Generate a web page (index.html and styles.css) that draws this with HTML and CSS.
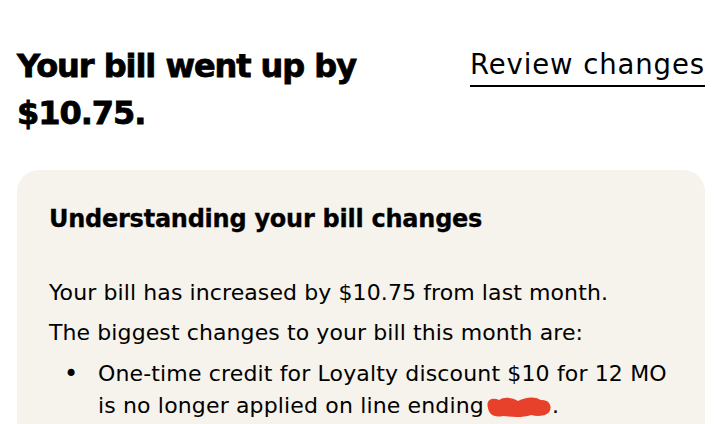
FILE: index.html
```html
<!DOCTYPE html>
<html lang="en">
<head>
    <meta charset="UTF-8">
    <meta name="viewport" content="width=device-width, initial-scale=1.0">
    <title>Bill changes</title>
    <link rel="stylesheet" href="styles.css">
</head>
<body>
    <div class="page">
        <!-- Header row -->
        <div class="header">
            <h1 class="headline">Your bill went up by<br>$10.75.</h1>
            <a class="review-link" href="#">Review changes</a>
        </div>

        <!-- Explanation card -->
        <div class="card">
            <h2 class="card-title">Understanding your bill changes</h2>
            <p class="card-text">Your bill has increased by $10.75 from last month.</p>
            <p class="card-text">The biggest changes to your bill this month are:</p>
            <ul class="changes">
                <li><span>One-time credit for Loyalty discount $10 for 12 MO is no longer applied on line ending<span class="redacted"><svg width="68" height="24" viewBox="0 0 72 24" preserveAspectRatio="none"><path d="M4 12 C2 4 10 2 16 5 C22 1 30 3 36 6 C44 2 54 1 60 5 C68 4 72 10 70 15 C68 21 58 22 50 20 C40 23 30 22 20 21 C10 23 5 19 4 12 Z" fill="#e8412b"/></svg></span>.</span></li>
            </ul>
        </div>
    </div>
</body>
</html>
```

FILE: styles.css
```css
body {
    margin: 0;
    background-color: #fff;
    color: #000;
    font-family: 'DejaVu Sans', sans-serif;
}
.page {
    padding: 43px 17px 0 17px;
}
.header {
    display: flex;
    justify-content: space-between;
    align-items: flex-start;
}
.headline {
    margin: 0;
    font-size: 32px;
    line-height: 47px;
    font-weight: bold;
    letter-spacing: -1.05px;
    -webkit-text-stroke: 0.8px #000;
}
.review-link {
    margin-top: 5px;
    color: #000;
    text-decoration: none;
    font-size: 27.5px;
    line-height: 32px;
    letter-spacing: 0.9px;
    border-bottom: 2px solid #000;
    padding-bottom: 5px;
}
.card {
    margin-top: 33px;
    background-color: #f6f2ec;
    border-radius: 22px;
    padding: 33px 32px 32px 32px;
}
.card-title {
    margin: 0 0 42px 0;
    font-size: 24px;
    line-height: 32px;
    font-weight: bold;
    letter-spacing: -0.25px;
    -webkit-text-stroke: 0.3px #000;
}
.card-text {
    margin: 0 0 8px 0;
    font-size: 22px;
    line-height: 32px;
    letter-spacing: 0.1px;
}
.changes {
    list-style: none;
    margin: 9px 0 0 0;
    padding: 0;
    font-size: 22px;
    line-height: 32px;
    letter-spacing: 0.15px;
}
.changes li {
    display: grid;
    grid-template-columns: 49px 1fr;
}
.changes li::before {
    content: "\2022";
    padding-left: 15px;
    font-size: 24px;
}
.redacted {
    display: inline-block;
    vertical-align: -6px;
}
```
